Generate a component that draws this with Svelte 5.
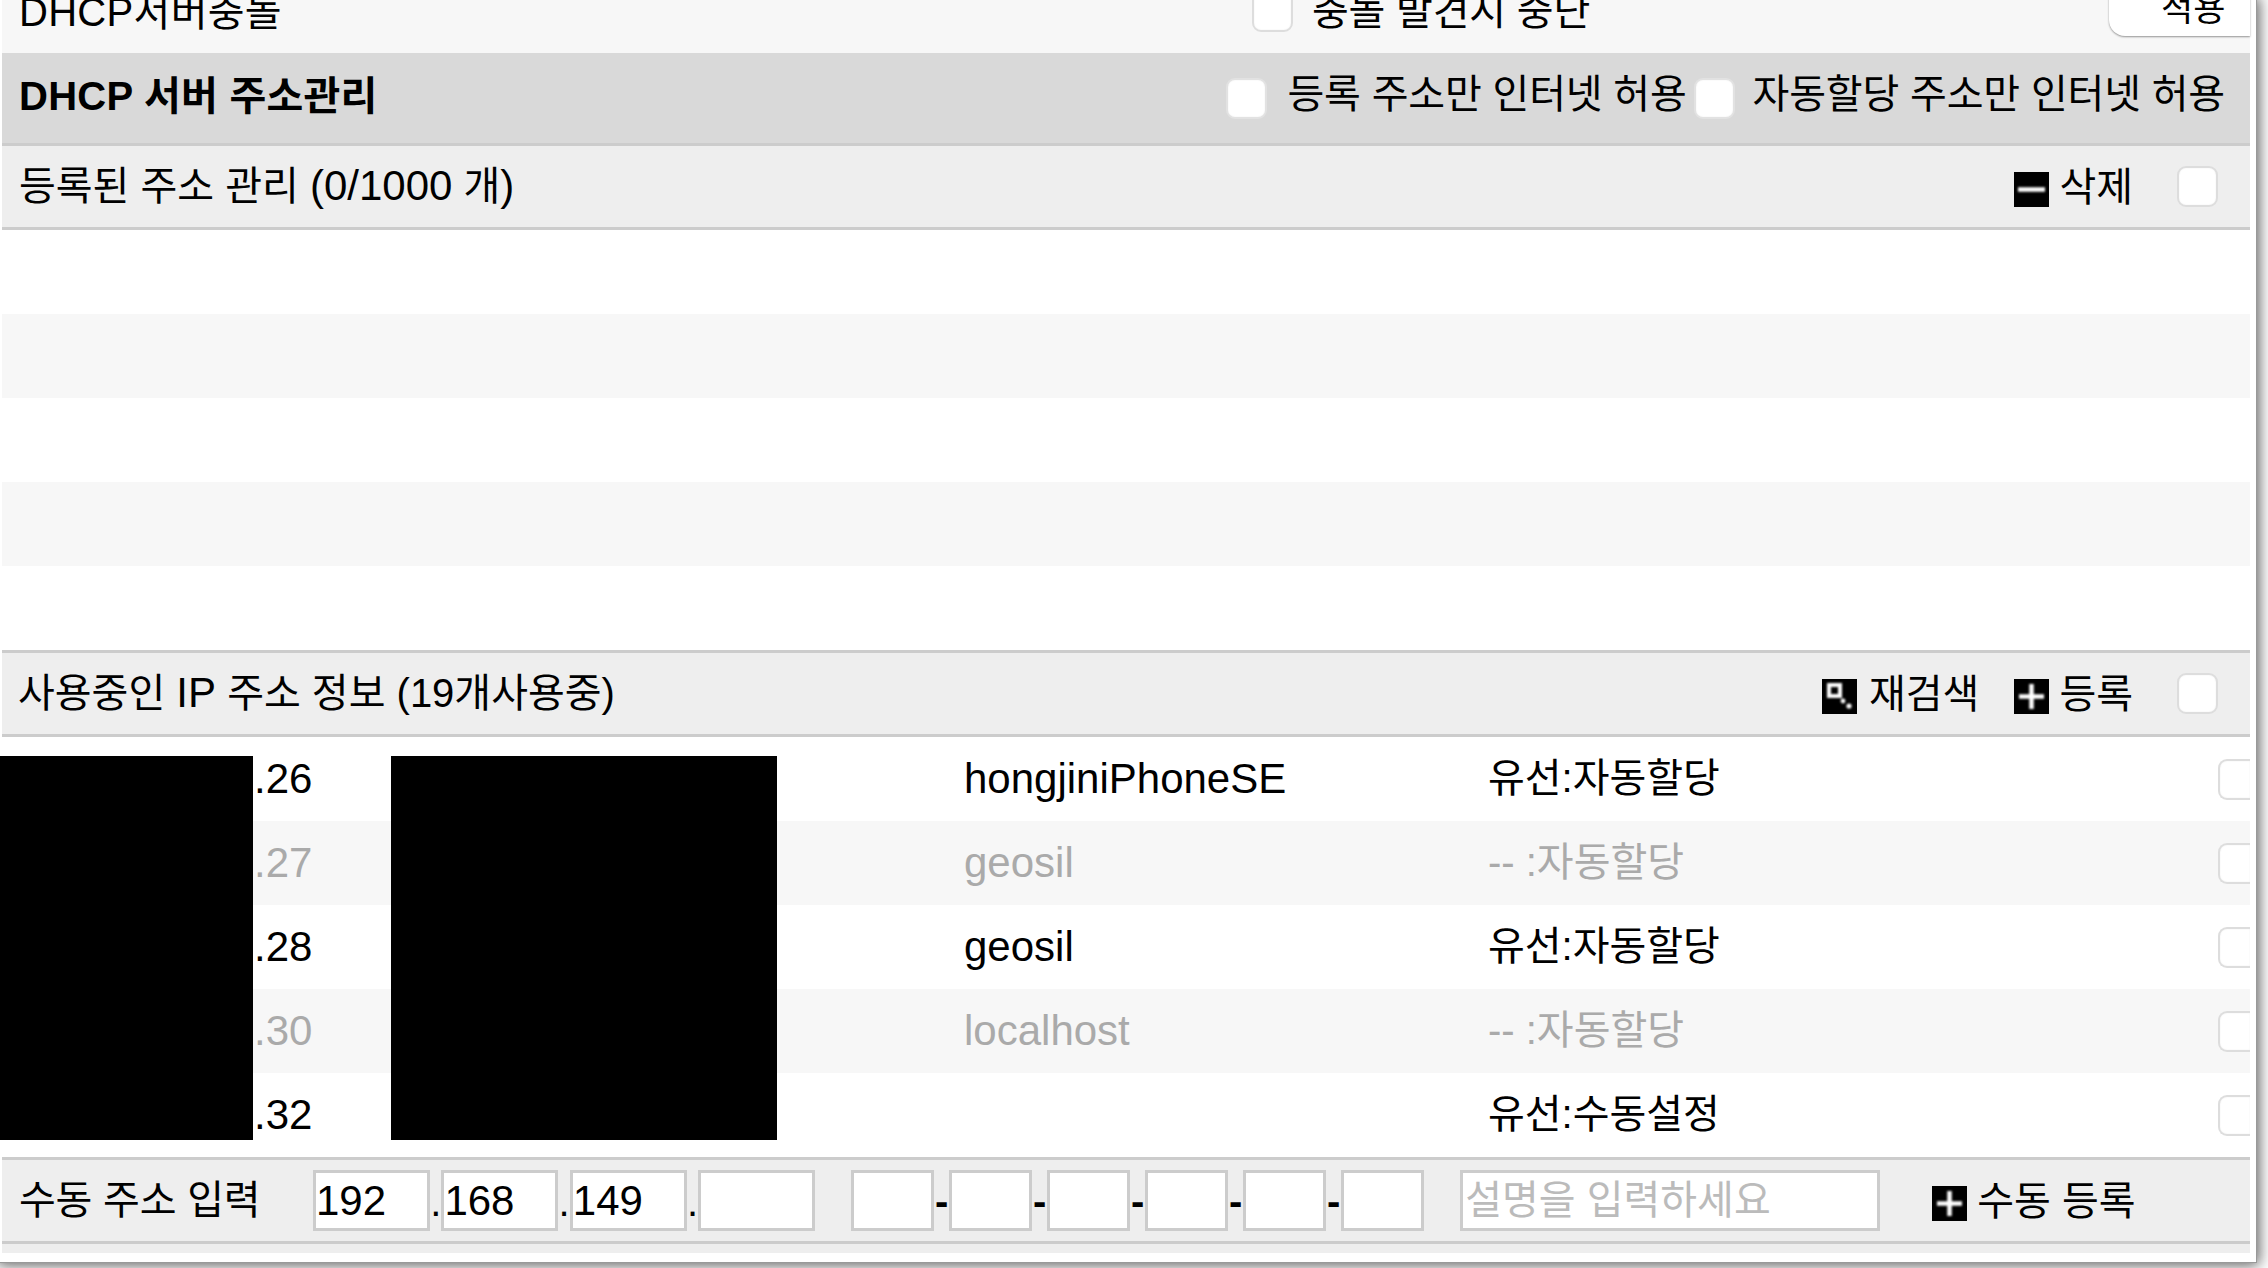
<script>
  const emptyRows = [0, 1, 2, 3, 4];
  const rows = [
    { ip: '.26', name: 'hongjiniPhoneSE', type: '유선:자동할당', off: false },
    { ip: '.27', name: 'geosil', type: '-- :자동할당', off: true },
    { ip: '.28', name: 'geosil', type: '유선:자동할당', off: false },
    { ip: '.30', name: 'localhost', type: '-- :자동할당', off: true },
    { ip: '.32', name: '', type: '유선:수동설정', off: false }
  ];
  const ipParts = ['192', '168', '149', ''];
  const macParts = ['', '', '', '', '', ''];
</script>

{#snippet plusIcon()}
  <svg class="icon" viewBox="0 0 35 35" aria-hidden="true">
    <rect width="35" height="35" fill="#000" />
    <path class="glow" d="M17.5 5V30M5 17.5H30" stroke="#fff" stroke-width="4.5" fill="none" />
  </svg>
{/snippet}

<div class="window">
  <div class="content">
    <div class="row top">
      <span class="title top-title">DHCP서버충돌</span>
      <input class="check" type="checkbox" />
      <span class="conflict-label">충돌 발견시 중단</span>
      <button class="apply">적용</button>
    </div>

    <div class="section">
      <strong class="title section-title">DHCP 서버 주소관리</strong>
      <div class="section-options">
        <input class="check" type="checkbox" />
        <span class="opt-a">등록 주소만 인터넷 허용</span>
        <input class="check" type="checkbox" />
        <span class="opt-b">자동할당 주소만 인터넷 허용</span>
      </div>
    </div>

    <div class="bar">
      <span class="title">등록된 주소 관리 <span class="lat">(0/1000</span> 개<span class="lat">)</span></span>
      <div class="actions">
        <span class="action">
          <svg class="icon" viewBox="0 0 35 35" aria-hidden="true">
            <rect width="35" height="35" fill="#000" />
            <path class="glow" d="M4 17.5H31" stroke="#fff" stroke-width="4.5" fill="none" />
          </svg>
          삭제
        </span>
        <input class="check" type="checkbox" />
      </div>
    </div>

    {#each emptyRows as r}
      <div class="row blank" class:stripe={r % 2 === 1}></div>
    {/each}

    <div class="bar second">
      <span class="title used-title">사용중인 <span class="lat">IP</span> 주소 정보 (19개사용중)</span>
      <div class="actions">
        <span class="action research">
          <svg class="icon" viewBox="0 0 35 35" aria-hidden="true">
            <rect width="35" height="35" fill="#000" />
            <g class="glow">
              <rect x="7" y="6" width="11" height="11" fill="none" stroke="#fff" stroke-width="4" />
              <circle cx="21" cy="22" r="2.4" fill="#fff" />
              <circle cx="27" cy="27" r="2.6" fill="#fff" />
            </g>
          </svg>
          재검색
        </span>
        <span class="action">
          {@render plusIcon()}
          등록
        </span>
        <input class="check" type="checkbox" />
      </div>
    </div>

    {#each rows as row, i}
      <div class="row data" class:stripe={i % 2 === 1} class:off={row.off}>
        <span class="cell ip">{row.ip}</span>
        <span class="cell name">{row.name}</span>
        <span class="cell type">{row.type}</span>
        <input class="check clipped" type="checkbox" />
      </div>
    {/each}

    <div class="bar manual">
      <span class="manual-label">수동 주소 입력</span>
      {#each ipParts as part, i}
        <input class="field ip-field" value={part} />
        {#if i < 3}<span class="dot">.</span>{/if}
      {/each}
      <span class="mac">
        {#each macParts as part, i}
          <input class="field mac-field" value={part} />
          {#if i < 5}<span class="dash">-</span>{/if}
        {/each}
      </span>
      <input class="field desc" placeholder="설명을 입력하세요" />
      <span class="action manual-action">
        {@render plusIcon()}
        수동 등록
      </span>
    </div>
    <div class="tail"></div>
  </div>

  <div class="mask mask-a"></div>
  <div class="mask mask-b"></div>
</div>

<style>
  :global(body) {
    margin: 0;
    background: #fff;
    overflow: hidden;
    height: 1268px;
  }
  .window {
    position: relative;
    display: flow-root;
    width: 2256px;
    height: 1262px;
    background: #fff;
    font-family: "Liberation Sans", "Noto Sans CJK KR", sans-serif;
    font-size: 40px;
    color: #000;
    outline: 1px solid #999;
    box-shadow: 0 0 14px 3px rgba(0, 0, 0, 0.65);
    clip-path: inset(0 -14px -8px 0);
  }
  .content {
    width: 2248px;
    margin-left: 2px;
    margin-top: -31px;
  }
  .row { display: flex; align-items: center; height: 84px; }
  .top { background: #f7f7f7; }
  .title { margin-left: 17px; padding-bottom: 8px; }
  .lat { font-size: 42px; }
  .top-title { width: 1233px; flex: none; padding-bottom: 5px; letter-spacing: 0.3px; }
  .conflict-label { margin-left: 19px; padding-bottom: 6px; letter-spacing: -0.2px; }
  .section-title { padding-bottom: 10px; letter-spacing: 0.25px; }
  .used-title { margin-left: 16px; }
  .apply {
    margin-left: auto;
    align-self: flex-end;
    width: 141px;
    height: 62px;
    margin-bottom: 17px;
    padding: 0 0 0 52px;
    font: inherit;
    font-size: 35px;
    color: inherit;
    background: #fff;
    border: 0;
    border-radius: 0 0 0 16px;
    box-shadow: 0 1px 2px rgba(0, 0, 0, 0.4);
    text-align: left;
  }
  .section {
    display: flex;
    align-items: center;
    justify-content: space-between;
    height: 90px;
    background: #d9d9d9;
  }
  .section-options { display: flex; align-items: center; padding-right: 25px; }
  .section-options .check { border-color: #e2e2e2; }
  .opt-a { margin: 0 7px 0 20px; padding-bottom: 14px; letter-spacing: -0.17px; }
  .opt-b { margin-left: 18px; padding-bottom: 14px; letter-spacing: -0.17px; }
  .bar {
    display: flex;
    align-items: center;
    justify-content: space-between;
    height: 81px;
    background: #eee;
    border-top: 3px solid #ccc;
    border-bottom: 3px solid #ccc;
  }
  .actions { display: flex; align-items: center; padding-right: 32px; }
  .action { display: inline-flex; align-items: center; gap: 10px; line-height: 1; }
  .research { margin-right: 35px; gap: 12px; }
  .actions .check { margin-left: 44px; }
  .icon { width: 35px; height: 35px; flex: none; margin-top: 6px; }
  .glow { filter: blur(1.1px); }
  .stripe { background: #f7f7f7; }
  .data .cell { display: block; flex: none; }
  .data .ip { width: 962px; padding-left: 252px; box-sizing: border-box; font-size: 42px; }
  .data .name { width: 524px; font-size: 42px; }
  .data .type { flex: 1; padding-bottom: 8px; }
  .off { color: #aaa; }
  .check {
    appearance: none;
    width: 41px;
    height: 41px;
    margin: 0;
    flex: none;
    background: #fff;
    border: 2px solid #ddd;
    border-radius: 9px;
    box-sizing: border-box;
    box-shadow: inset 0 0 2px #f0f0f0;
  }
  .clipped { width: 32px; border-right: 0; border-radius: 9px 0 0 9px; }
  .manual { justify-content: flex-start; }
  .manual-label { margin-left: 17px; width: 294px; flex: none; padding-bottom: 8px; letter-spacing: -0.2px; }
  .field {
    height: 61px;
    box-sizing: border-box;
    border: 3px solid #ccc;
    background: #fff;
    font: inherit;
    color: #000;
    padding: 0;
    margin: 0;
    border-radius: 0;
    outline: none;
    flex: none;
  }
  .ip-field { width: 117px; font-size: 42px; }
  .dot { width: 11.4px; flex: none; text-align: center; padding-top: 4px; }
  .mac { display: flex; align-items: center; margin-left: 36px; }
  .mac-field { width: 83px; }
  .dash { width: 15px; text-align: center; flex: none; font-weight: 700; line-height: 1; }
  .desc { width: 420px; margin-left: 36px; padding-left: 2px; }
  .desc::placeholder { color: #bbb; opacity: 1; }
  .manual-action { margin-left: 52px; }
  .tail { height: 9px; background: #eee; }
  .mask { position: absolute; top: 756px; height: 384px; background: #000; }
  .mask-a { left: 0; width: 253px; }
  .mask-b { left: 391px; width: 386px; }
</style>
